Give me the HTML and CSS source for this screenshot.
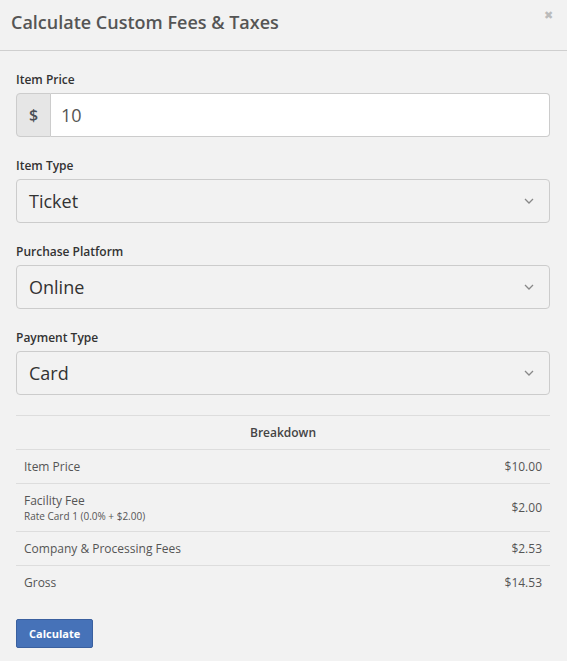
FILE: index.html
```html
<!DOCTYPE html>
<html>
<head>
<meta charset="utf-8">
<link rel="stylesheet" href="styles.css">
</head>
<body>
<div class="modal">
  <div class="modal-header">
    <h1 class="modal-title">Calculate Custom Fees &amp; Taxes</h1>
    <span class="close">&#x2716;</span>
  </div>
  <div class="modal-body">
    <div class="form-group">
      <label class="label">Item Price</label>
      <div class="input-group">
        <span class="addon">$</span>
        <div class="input">10</div>
      </div>
    </div>
    <div class="form-group">
      <label class="label">Item Type</label>
      <div class="select"><span>Ticket</span><svg class="chev" width="10" height="6" viewBox="0 0 10 6"><path d="M1 1l4 4 4-4" fill="none" stroke="#888" stroke-width="1.3"/></svg></div>
    </div>
    <div class="form-group">
      <label class="label">Purchase Platform</label>
      <div class="select"><span>Online</span><svg class="chev" width="10" height="6" viewBox="0 0 10 6"><path d="M1 1l4 4 4-4" fill="none" stroke="#888" stroke-width="1.3"/></svg></div>
    </div>
    <div class="form-group">
      <label class="label">Payment Type</label>
      <div class="select"><span>Card</span><svg class="chev" width="10" height="6" viewBox="0 0 10 6"><path d="M1 1l4 4 4-4" fill="none" stroke="#888" stroke-width="1.3"/></svg></div>
    </div>
    <table class="breakdown">
      <thead>
        <tr><th colspan="2">Breakdown</th></tr>
      </thead>
      <tbody>
        <tr><td>Item Price</td><td class="num">$10.00</td></tr>
        <tr><td>Facility Fee<div class="sub">Rate Card 1 (0.0% + $2.00)</div></td><td class="num">$2.00</td></tr>
        <tr><td>Company &amp; Processing Fees</td><td class="num">$2.53</td></tr>
        <tr><td>Gross</td><td class="num">$14.53</td></tr>
      </tbody>
    </table>
    <button class="btn">Calculate</button>
  </div>
</div>
</body>
</html>
```
FILE: styles.css
```css
html, body {
  margin: 0;
  padding: 0;
  background: #f2f2f2;
  font-family: "Open Sans", "Liberation Sans", sans-serif;
  color: #555;
}
.modal-header {
  height: 50px;
  border-bottom: 1px solid #cfcfcf;
  display: flex;
  align-items: flex-start;
  justify-content: space-between;
  padding: 0 11px;
  position: relative;
}
.modal-title {
  margin: 0;
  padding-top: 10px;
  font-size: 18px;
  font-weight: 600;
  color: #555;
  line-height: 25px;
}
.close {
  position: absolute;
  right: 14px;
  top: 8px;
  font-size: 11px;
  color: #bbb;
  line-height: 14px;
}
.modal-body {
  padding: 20px 17px 20px 16px;
}
.form-group {
  margin-bottom: 20px;
}
.label {
  display: block;
  font-size: 12px;
  font-weight: 600;
  color: #333;
  line-height: 17px;
  margin-bottom: 5px;
}
.input-group {
  display: flex;
  height: 44px;
  box-sizing: border-box;
}
.addon {
  width: 35px;
  box-sizing: border-box;
  background: #e6e6e6;
  border: 1px solid #ccc;
  border-radius: 4px 0 0 4px;
  display: flex;
  align-items: center;
  justify-content: center;
  font-size: 16px;
  font-weight: 600;
  color: #4a4f57;
}
.input {
  flex: 1;
  background: #fff;
  border: 1px solid #ccc;
  border-left: none;
  border-radius: 0 4px 4px 0;
  display: flex;
  align-items: center;
  padding-left: 10px;
  font-size: 18px;
  color: #555;
}
.select {
  height: 44px;
  box-sizing: border-box;
  border: 1px solid #ccc;
  border-radius: 4px;
  background: #f2f2f2;
  display: flex;
  align-items: center;
  justify-content: space-between;
  padding: 0 15px 0 12px;
  font-size: 18px;
  color: #333;
}
.chev {
  display: block;
}
.breakdown {
  width: 100%;
  border-collapse: collapse;
  font-size: 12px;
  color: #555;
}
.breakdown th {
  border-top: 1px solid #ddd;
  border-bottom: 1px solid #ddd;
  padding: 8px;
  line-height: 17px;
  font-weight: 600;
  color: #444;
  text-align: center;
}
.breakdown td {
  border-top: 1px solid #ddd;
  padding: 8px;
  line-height: 17px;
  vertical-align: middle;
}
.breakdown tbody tr:first-child td {
  border-top: none;
}
.breakdown .num {
  text-align: right;
}
.sub {
  font-size: 10px;
  line-height: 14px;
}
.btn {
  margin-top: 20px;
  display: block;
  font-family: "Open Sans", "Liberation Sans", sans-serif;
  font-size: 11px;
  font-weight: 700;
  color: #fff;
  background: #4672b8;
  border: 1px solid #3a609f;
  border-radius: 2px;
  padding: 0 12px;
  height: 29px;
  line-height: 27px;
}
```
